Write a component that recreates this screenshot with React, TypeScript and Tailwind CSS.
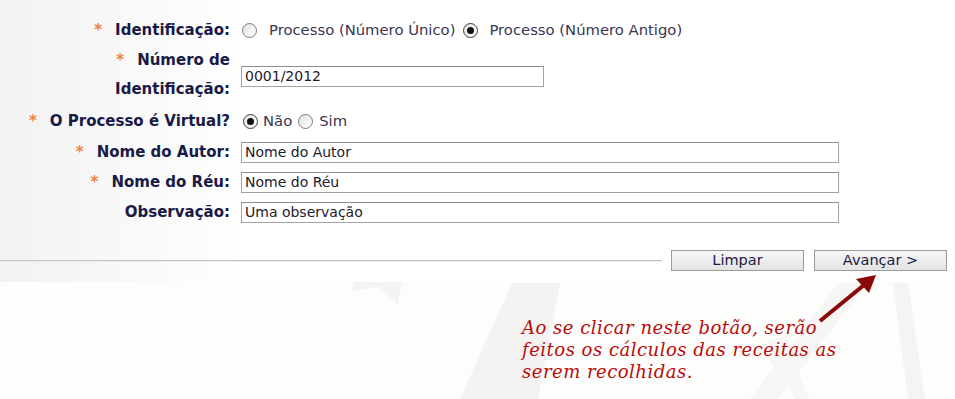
import React from "react";

const FONT = { fontFamily: "'DejaVu Sans', Verdana, sans-serif" };

function Radio({ checked }: { checked?: boolean }) {
  return (
    <span
      className={
        "flex h-[15px] w-[15px] shrink-0 items-center justify-center rounded-full border bg-[linear-gradient(135deg,#e2e2e2,#ffffff)] " +
        (checked ? "border-[#3c3c3c]" : "border-[#7c7c7c]")
      }
    >
      {checked && <span className="block h-[7px] w-[7px] rounded-full bg-[#111111]" />}
    </span>
  );
}

function Star() {
  return <span className="mr-[13px] text-[#f0823f]">*</span>;
}

function Row({
  h,
  label,
  children,
  lh,
}: {
  h: string;
  label: React.ReactNode;
  children: React.ReactNode;
  lh?: string;
}) {
  return (
    <div className={"flex items-center " + h}>
      <div className={"w-[230px] shrink-0 text-right text-[15px] font-bold text-[#1a1a46] " + (lh ?? "leading-[20px]")}>
        {label}
      </div>
      <div className="ml-[11px] flex items-center">{children}</div>
    </div>
  );
}

function TextBox({ w, value }: { w: string; value: string }) {
  return (
    <div
      className={
        "flex h-[21px] items-center border border-[#a3a3a3] border-t-[#8f8f8f] bg-white pl-[3px] text-[14px] text-[#1e1a2a] " + w
      }
    >
      {value}
    </div>
  );
}

function Btn({ children }: { children: React.ReactNode }) {
  return (
    <div className="flex h-[21px] w-[133px] items-center justify-center border border-[#9c9c9c] bg-[linear-gradient(to_bottom,#f6f6f6,#e3e3e3)] text-[14.5px] text-[#1a1a46]">
      {children}
    </div>
  );
}

export default function App() {
  return (
    <div className="relative h-[399px] w-[955px] overflow-hidden bg-[#fdfdfb]" style={FONT}>
      {/* watermark */}
      <svg className="absolute left-0 top-0" width="955" height="399" viewBox="0 0 955 399">
        <polygon points="353,282 402,282 398,305 378,287 353,291" fill="#f4f3f1" />
        <polygon points="512,283 560,283 538,399 460,399" fill="#f4f3f1" />
        <polygon points="838,283 868,283 778,399 750,399" fill="#f7f6f4" />
        <polygon points="893,283 908,283 925,399 908,399" fill="#f5f4f2" />
        <polygon points="760,345 800,330 785,345 810,399 795,399" fill="#f8f7f5" />
      </svg>

      <div className="relative h-[282px] bg-[linear-gradient(to_right,#f2f2f2_0px,#fbfbfb_180px,#ffffff_240px)] pt-[15px]">
        <Row h="h-[30px]" label={<><Star />Identificação:</>}>
          <div className="ml-[1px]"><Radio /></div>
          <span className="ml-[12px] text-[14.8px] text-[#3a3650]">Processo (Número Único)</span>
          <div className="ml-[8px]"><Radio checked /></div>
          <span className="ml-[11px] text-[14.8px] text-[#3a3650]">Processo (Número Antigo)</span>
        </Row>
        <Row
          h="h-[60px]"
          lh="leading-[29px]"
          label={
            <>
              <Star />Número de
              <br />
              Identificação:
            </>
          }
        >
          <div className="mt-[3px]">
            <TextBox w="w-[303px]" value="0001/2012" />
          </div>
        </Row>
        <Row h="h-[32px]" label={<><Star />O Processo é Virtual?</>}>
          <div className="ml-[2px]"><Radio checked /></div>
          <span className="ml-[5px] text-[14.8px] text-[#3a3650]">Não</span>
          <div className="ml-[6px]"><Radio /></div>
          <span className="ml-[6px] text-[14.8px] text-[#3a3650]">Sim</span>
        </Row>
        <Row h="h-[30px]" label={<><Star />Nome do Autor:</>}>
          <TextBox w="w-[598px]" value="Nome do Autor" />
        </Row>
        <Row h="h-[30px]" label={<><Star />Nome do Réu:</>}>
          <TextBox w="w-[598px]" value="Nome do Réu" />
        </Row>
        <Row h="h-[30px]" label={<>Observação:</>}>
          <TextBox w="w-[598px]" value="Uma observação" />
        </Row>

        <div className="mt-[23px] flex h-[21px] items-center">
          <div className="h-[2px] w-[662px] border-t border-[#c4c4c4] border-b-[#ececec] border-b" />
          <div className="ml-[9px]"><Btn>Limpar</Btn></div>
          <div className="ml-[10px]"><Btn>Avançar &gt;</Btn></div>
        </div>
      </div>

      {/* annotation */}
      <div
        className="relative pl-[522px] pt-[35px] text-[18px] italic leading-[22px] tracking-[0.5px] text-[#b80c0c]"
        style={{ fontFamily: "'DejaVu Serif', 'Liberation Serif', serif" }}
      >
        <div>Ao se clicar neste botão, serão</div>
        <div>feitos os cálculos das receitas as</div>
        <div>serem recolhidas.</div>
      </div>
      <svg className="absolute left-0 top-0" width="955" height="399" viewBox="0 0 955 399">
        <line x1="820" y1="321" x2="864" y2="285" stroke="#8a0a0a" strokeWidth="4" />
        <polygon points="876,275 869,293 856,279" fill="#8a0a0a" />
      </svg>
    </div>
  );
}
